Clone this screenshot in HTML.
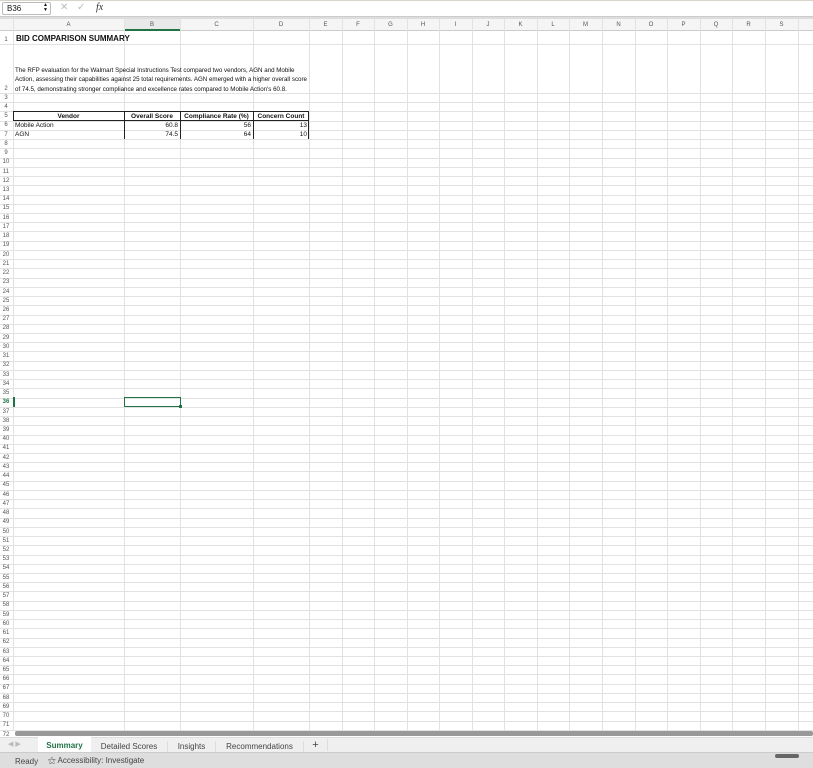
<!DOCTYPE html>
<html><head><meta charset="utf-8"><style>
*{margin:0;padding:0;box-sizing:border-box}
body{width:813px;height:768px;overflow:hidden;background:#fff;font-family:"Liberation Sans",sans-serif;position:relative}
.a{position:absolute}
.t{position:absolute;font-size:6.5px;color:#111;white-space:nowrap;line-height:9px}
.rn{position:absolute;left:0;width:12px;text-align:center;font-size:6px;color:#555}
.ch{position:absolute;top:19px;height:12px;font-size:6px;color:#555;text-align:center;line-height:12px}
</style></head><body>
<div class="a" style="left:0;top:0;width:813px;height:1px;background:#d8d4c8"></div>
<div class="a" style="left:0;top:1px;width:813px;height:16px;background:#fff;border-bottom:1px solid #ccc"></div>
<div class="a" style="left:2px;top:2px;width:49px;height:13px;border:1px solid #bbb;border-radius:2px;font-size:8px;line-height:11px;padding-left:4px;color:#111">B36<span style="position:absolute;right:2px;top:0;font-size:5px;line-height:5px">▲<br>▼</span></div>
<div class="a" style="left:60px;top:2px;font-size:10px;color:#bbb">✕</div>
<div class="a" style="left:77px;top:2px;font-size:10px;color:#bbb">✓</div>
<div class="a" style="left:96px;top:2px;font-size:10px;font-style:italic;font-family:'Liberation Serif',serif;color:#333">fx</div>
<div class="a" style="left:0;top:17px;width:813px;height:2px;background:#ddd"></div>
<div class="a" style="left:0;top:19px;width:813px;height:12px;background:#f5f5f5;border-bottom:1px solid #ccc"></div>
<div class="a" style="left:124px;top:19px;width:56px;height:12px;background:#e9e9e9;border-bottom:2px solid #217346"></div>
<div id="g"></div>
<div class="t" style="left:16px;top:34px;font-weight:bold;font-size:8px">BID COMPARISON SUMMARY</div>
<div class="t" style="left:15px;top:66px;line-height:9.3px;font-size:6.2px">The RFP evaluation for the Walmart Special Instructions Test compared two vendors, AGN and Mobile<br>Action, assessing their capabilities against 25 total requirements. AGN emerged with a higher overall score<br>of 74.5, demonstrating stronger compliance and excellence rates compared to Mobile Action's 60.8.</div>
<div class="a" style="left:13px;top:111px;width:296px;height:10px;border:1px solid #222"></div>
<div class="a" style="left:124px;top:111px;width:1px;height:28px;background:#222"></div>
<div class="a" style="left:180px;top:111px;width:1px;height:28px;background:#222"></div>
<div class="a" style="left:253px;top:111px;width:1px;height:28px;background:#222"></div>
<div class="a" style="left:308px;top:111px;width:1px;height:28px;background:#222"></div>
<div class="t" style="left:13px;top:112px;width:111px;text-align:center;font-weight:bold">Vendor</div>
<div class="t" style="left:124px;top:112px;width:56px;text-align:center;font-weight:bold">Overall Score</div>
<div class="t" style="left:180px;top:112px;width:73px;text-align:center;font-weight:bold">Compliance Rate (%)</div>
<div class="t" style="left:253px;top:112px;width:56px;text-align:center;font-weight:bold">Concern Count</div>
<div class="t" style="left:15px;top:121px">Mobile Action</div>
<div class="t" style="left:124px;top:121px;width:54px;text-align:right">60.8</div>
<div class="t" style="left:180px;top:121px;width:71px;text-align:right">56</div>
<div class="t" style="left:253px;top:121px;width:54px;text-align:right">13</div>
<div class="t" style="left:15px;top:130px">AGN</div>
<div class="t" style="left:124px;top:130px;width:54px;text-align:right">74.5</div>
<div class="t" style="left:180px;top:130px;width:71px;text-align:right">64</div>
<div class="t" style="left:253px;top:130px;width:54px;text-align:right">10</div>
<div class="a" style="left:124px;top:397px;width:57px;height:10px;border:1.5px solid #217346"></div>
<div class="a" style="left:179px;top:405px;width:3px;height:3px;background:#217346"></div>
<div class="a" style="left:13px;top:397px;width:1.5px;height:10px;background:#217346"></div>
<div class="a" style="left:15px;top:731px;width:798px;height:5px;background:#999;border-radius:2px"></div>
<div class="a" style="left:0;top:737px;width:813px;height:16px;background:#efefef;border-top:1px solid #ddd;border-bottom:1px solid #ccc"></div>
<div class="a" style="left:8px;top:740px;font-size:7px;color:#bbb">◀ ▶</div>
<div class="a" style="left:38px;top:737px;width:53px;height:15px;background:#fff;font-size:8px;color:#217346;font-weight:bold;text-align:center;line-height:17px">Summary</div>
<div class="a" style="left:91px;top:741px;width:77px;font-size:8px;color:#444;text-align:center;border-right:1px solid #ddd;line-height:11px">Detailed Scores</div>
<div class="a" style="left:168px;top:741px;width:48px;font-size:8px;color:#444;text-align:center;border-right:1px solid #ddd;line-height:11px">Insights</div>
<div class="a" style="left:216px;top:741px;width:88px;font-size:8px;color:#444;text-align:center;border-right:1px solid #ddd;line-height:11px">Recommendations</div>
<div class="a" style="left:304px;top:739px;width:24px;font-size:11px;color:#444;text-align:center;border-right:1px solid #ddd">+</div>
<div class="a" style="left:0;top:753px;width:813px;height:15px;background:#dedede"></div>
<div class="a" style="left:15px;top:757px;font-size:8px;color:#444">Ready</div>
<div class="a" style="left:48px;top:756px;font-size:8px;color:#444">⚝ Accessibility: Investigate</div>
<div class="a" style="left:775px;top:754px;width:24px;height:4px;background:#666;border-radius:2px"></div>
<script>
var g=document.getElementById('g'),h='';
var cols=[13,124,180,253,309,342,374,407,439,472,504,537,569,602,635,667,700,732,765,798];
var L='ABCDEFGHIJKLMNOPQRS';
for(var i=0;i<cols.length;i++){
 h+='<div class="a" style="left:'+cols[i]+'px;top:19px;width:1px;height:712px;background:#e2e2e2"></div>';
 if(i<19)h+='<div class="ch" style="left:'+cols[i]+'px;width:'+(cols[i+1]-cols[i])+'px">'+L[i]+'</div>';
}
var tops=[31,44];for(var n=3;n<=73;n++)tops.push(93+(n-3)*9.23);
for(var r=0;r<72;r++){
 var t=tops[r],b=tops[r+1];
 h+='<div class="a" style="left:0;top:'+b.toFixed(2)+'px;width:813px;height:1px;background:#e2e2e2"></div>';
 h+='<div class="rn" style="top:'+(b-7.5).toFixed(2)+'px;'+(r==35?'color:#217346;font-weight:bold':'')+'">'+(r+1)+'</div>';
}
g.innerHTML=h;
</script>
</body></html>
